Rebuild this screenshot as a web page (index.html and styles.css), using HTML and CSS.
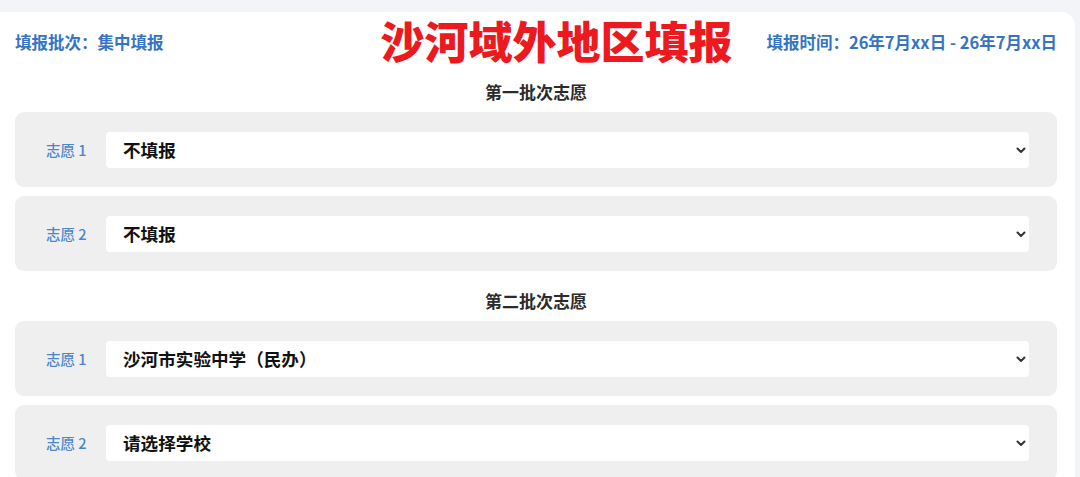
FILE: index.html
```html
<!DOCTYPE html>
<html lang="zh-CN">
<head>
  <meta charset="UTF-8" />
  <meta name="viewport" content="width=device-width, initial-scale=1.0"/>
  <title>沙河域外地区填报</title>
  <link rel="stylesheet" href="styles.css">
</head>
<body>

  <div class="card">
    <div class="header">
      <div class="info">填报批次：集中填报</div>
      <div class="title">沙河域外地区填报</div>
      <div class="info time">填报时间：26年7月xx日 - 26年7月xx日</div>
    </div>

    <div class="batch">
      <div class="batch-title">第一批次志愿</div>
      <div class="choice">
        <label class="choice-label">志愿 1</label>
        <div class="select-wrap">
          <select><option>不填报</option></select>
          <svg class="arrow" width="10" height="7" viewBox="0 0 10 7"><path d="M1.5 1.5 L5 5 L8.5 1.5" fill="none" stroke="#333" stroke-width="2" stroke-linecap="round" stroke-linejoin="round"/></svg>
        </div>
      </div>
      <div class="choice">
        <label class="choice-label">志愿 2</label>
        <div class="select-wrap">
          <select><option>不填报</option></select>
          <svg class="arrow" width="10" height="7" viewBox="0 0 10 7"><path d="M1.5 1.5 L5 5 L8.5 1.5" fill="none" stroke="#333" stroke-width="2" stroke-linecap="round" stroke-linejoin="round"/></svg>
        </div>
      </div>
    </div>

    <div class="batch">
      <div class="batch-title">第二批次志愿</div>
      <div class="choice">
        <label class="choice-label">志愿 1</label>
        <div class="select-wrap">
          <select><option>沙河市实验中学（民办）</option></select>
          <svg class="arrow" width="10" height="7" viewBox="0 0 10 7"><path d="M1.5 1.5 L5 5 L8.5 1.5" fill="none" stroke="#333" stroke-width="2" stroke-linecap="round" stroke-linejoin="round"/></svg>
        </div>
      </div>
      <div class="choice">
        <label class="choice-label">志愿 2</label>
        <div class="select-wrap">
          <select><option>请选择学校</option></select>
          <svg class="arrow" width="10" height="7" viewBox="0 0 10 7"><path d="M1.5 1.5 L5 5 L8.5 1.5" fill="none" stroke="#333" stroke-width="2" stroke-linecap="round" stroke-linejoin="round"/></svg>
        </div>
      </div>
    </div>
  </div>

</body>
</html>
```

FILE: styles.css
```css
body {
  font-family: "Noto Sans CJK SC", "Noto Sans", sans-serif;
  background: #f3f4f8;
  margin: 0;
  padding: 0;
  overflow: hidden;
}

.card {
  background: #fff;
  margin: 12px 5px 0 0;
  padding: 0 18px 0 15px;
  border-radius: 0 14px 0 0;
  min-height: 480px;
}

.header {
  display: flex;
  align-items: center;
  height: 60px;
}

.info {
  font-size: 16.5px;
  font-weight: bold;
  color: #3574c4;
}

.title {
  margin-left: 217px;
  margin-bottom: 4px;
  font-size: 44px;
  line-height: 1;
  font-weight: 900;
  color: #ec1a1f;
}

.time {
  margin-left: auto;
}

.batch {
  display: flex;
  flex-direction: column;
  gap: 9px;
}

.batch + .batch {
  margin-top: 10px;
}

.batch-title {
  text-align: center;
  font-size: 17px;
  font-weight: bold;
  line-height: 20px;
  color: #2b2b2b;
  margin: 10px 0 1px;
}

.choice {
  display: flex;
  align-items: center;
  height: 75px;
  padding: 0 28px 0 31px;
  background: #efefef;
  border-radius: 9px;
}

.choice-label {
  width: 60px;
  font-size: 14.5px;
  font-weight: 500;
  color: #4a86cc;
}

.select-wrap {
  flex: 1;
  position: relative;
}

select {
  width: 100%;
  height: 36px;
  padding: 0 30px 0 17px;
  border: none;
  border-radius: 4px;
  background: #fff;
  font-family: inherit;
  font-size: 17.6px;
  font-weight: bold;
  color: #111;
  appearance: none;
  -webkit-appearance: none;
  outline: none;
}

.arrow {
  position: absolute;
  right: 3px;
  top: 15px;
}
```
